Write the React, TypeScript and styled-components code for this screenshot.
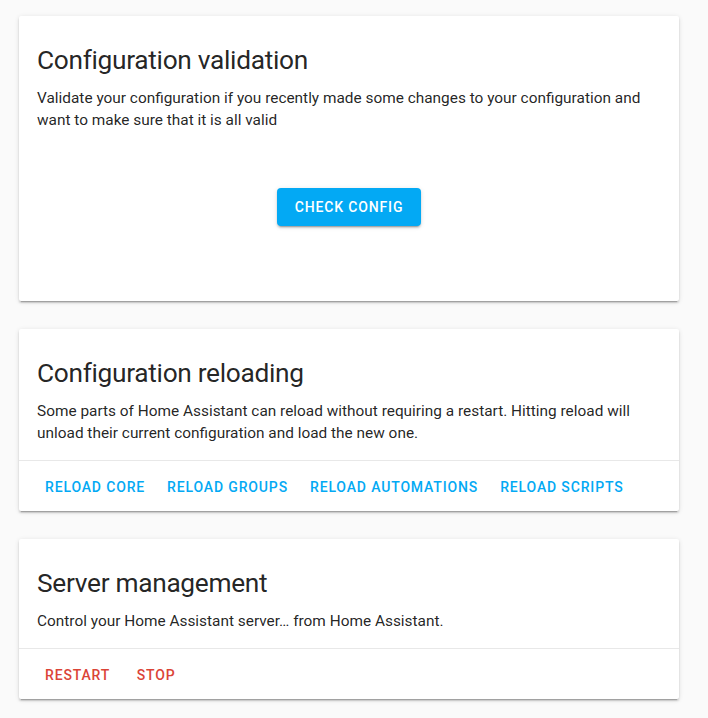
import React from "react";
import styled, { createGlobalStyle } from "styled-components";

const GlobalStyle = createGlobalStyle`
  body {
    margin: 0;
    background: #fafafa;
    font-family: Roboto, "Noto Sans", sans-serif;
    -webkit-font-smoothing: antialiased;
  }
`;

const primary = "#03a9f4";
const red = "#db4437";

const Page = styled.div`
  display: flex;
  flex-direction: column;
  gap: 28px;
  width: 660px;
  padding: 16px 0 20px 19px;
`;

const Card = styled.section`
  background: #fff;
  border-radius: 2px;
  box-shadow: 0 2px 2px 0 rgba(0, 0, 0, 0.14), 0 1px 5px 0 rgba(0, 0, 0, 0.12),
    0 3px 1px -2px rgba(0, 0, 0, 0.2);
  color: rgba(0, 0, 0, 0.87);
`;

const Header = styled.h2`
  margin: 0;
  padding: 24px 18px 0;
  font-size: 26.3px;
  font-weight: 400;
  line-height: 40px;
  letter-spacing: -0.012em;
`;

const Content = styled.div`
  padding: 7px 18px 16px;
  font-size: 15.4px;
  line-height: 22px;
`;

const Description = styled.p`
  margin: 0;
`;

const Validate = styled.div`
  display: flex;
  justify-content: center;
  padding: 41px 0 75px;
`;

const RaisedButton = styled.button`
  height: 38px;
  padding: 0 18px;
  border: none;
  border-radius: 4px;
  background: ${primary};
  color: #fff;
  font-family: inherit;
  font-size: 14px;
  font-weight: 500;
  letter-spacing: 0.85px;
  text-transform: uppercase;
  box-shadow: 0 3px 1px -2px rgba(0, 0, 0, 0.2), 0 2px 2px 0 rgba(0, 0, 0, 0.14),
    0 1px 5px 0 rgba(0, 0, 0, 0.12);
  cursor: pointer;
`;

const Actions = styled.div`
  display: flex;
  gap: 6px;
  padding: 8px 18px 6px;
  border-top: 1px solid #e8e8e8;
`;

const TextButton = styled.button<{ $tone: string }>`
  height: 36px;
  min-width: 64px;
  padding: 0 8px;
  border: none;
  background: none;
  color: ${(p) => p.$tone};
  font-family: inherit;
  font-size: 14px;
  font-weight: 500;
  letter-spacing: 0.85px;
  text-transform: uppercase;
  cursor: pointer;
`;

export default function App() {
  return (
    <>
      <GlobalStyle />
      <Page>
        <Card>
          <Header>Configuration validation</Header>
          <Content>
            <Description>
              Validate your configuration if you recently made some changes to
              your configuration and want to make sure that it is all valid
            </Description>
          </Content>
          <Validate>
            <RaisedButton>Check config</RaisedButton>
          </Validate>
        </Card>

        <Card>
          <Header>Configuration reloading</Header>
          <Content>
            <Description>
              Some parts of Home Assistant can reload without requiring a
              restart. Hitting reload will unload their current configuration
              and load the new one.
            </Description>
          </Content>
          <Actions>
            <TextButton $tone={primary}>Reload core</TextButton>
            <TextButton $tone={primary}>Reload groups</TextButton>
            <TextButton $tone={primary}>Reload automations</TextButton>
            <TextButton $tone={primary}>Reload scripts</TextButton>
          </Actions>
        </Card>

        <Card>
          <Header>Server management</Header>
          <Content>
            <Description>
              Control your Home Assistant server… from Home Assistant.
            </Description>
          </Content>
          <Actions>
            <TextButton $tone={red}>Restart</TextButton>
            <TextButton $tone={red}>Stop</TextButton>
          </Actions>
        </Card>
      </Page>
    </>
  );
}
